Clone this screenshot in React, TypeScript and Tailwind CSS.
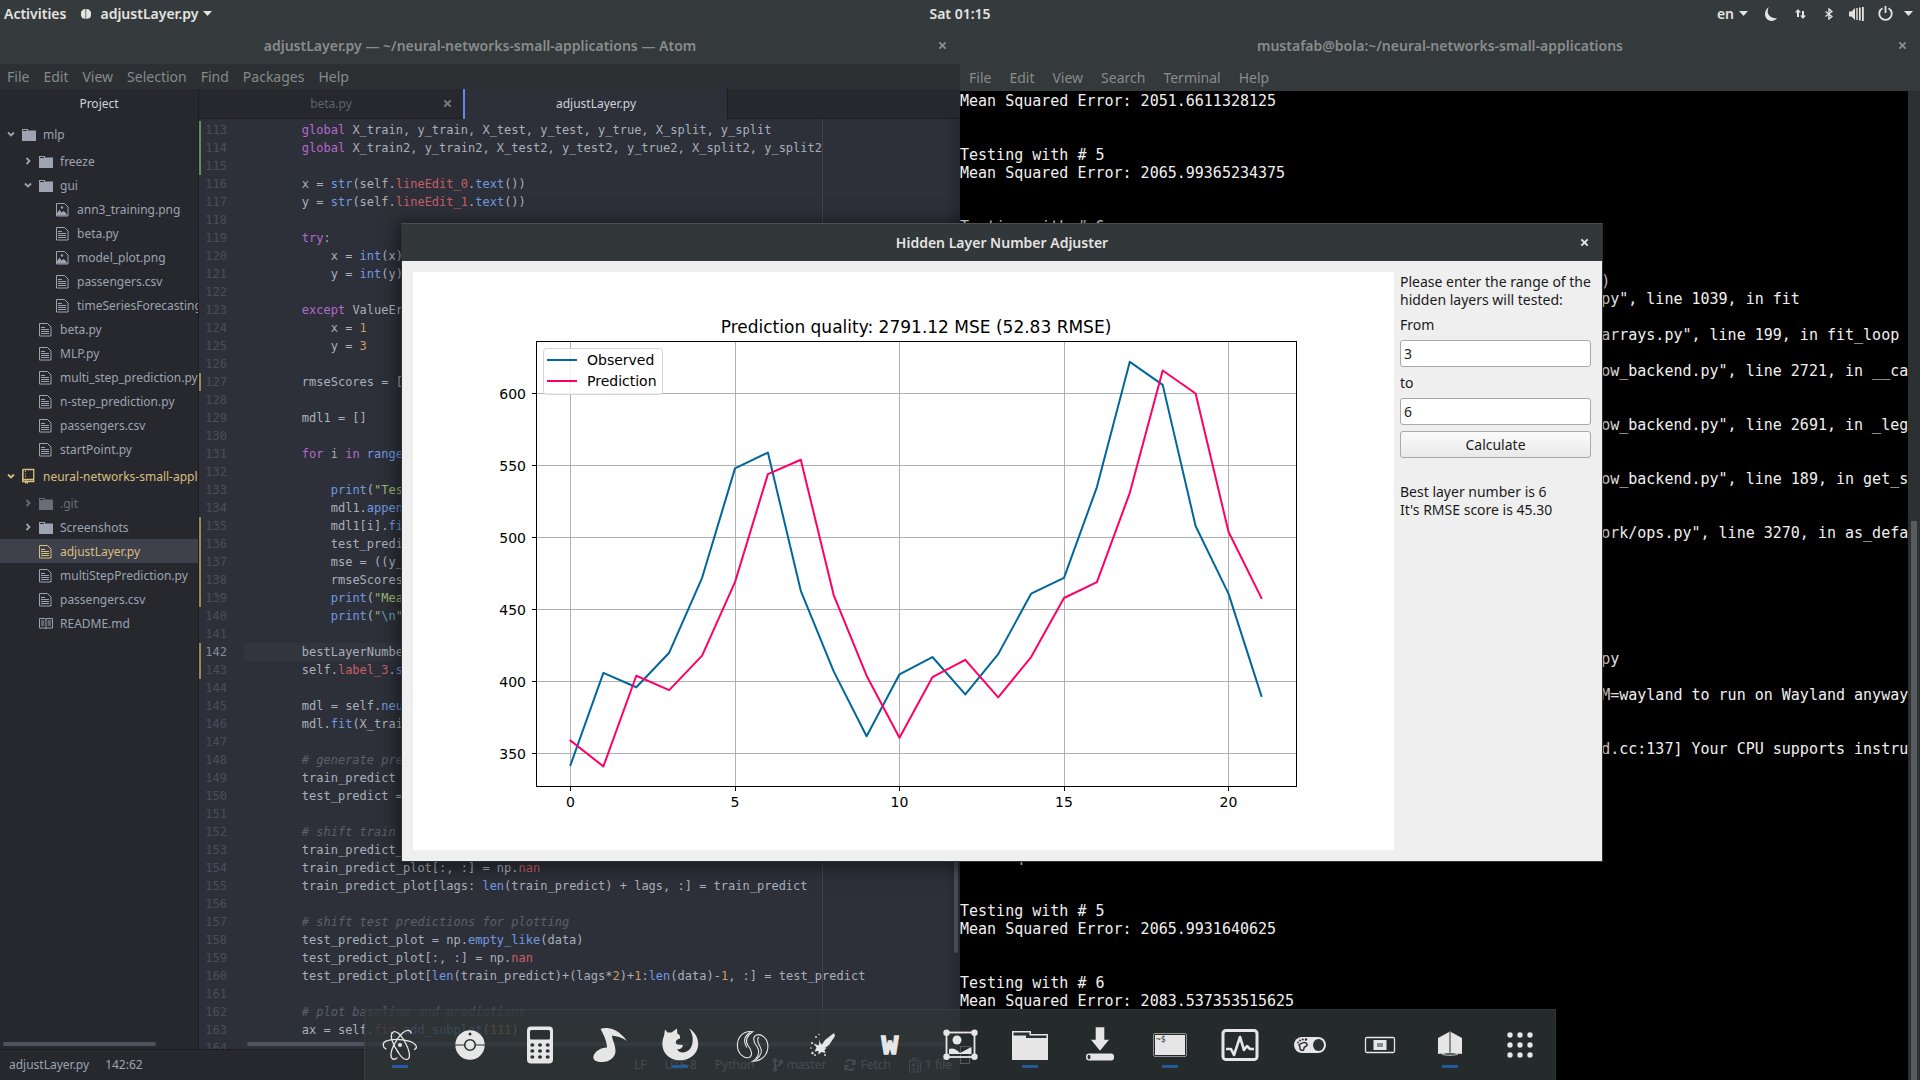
import React from "react";

type Tok = string | [keyof typeof TOKEN_COLORS, string];

const TOKEN_COLORS = {
  k: "text-[#b36bcb]",
  f: "text-[#7199e0]",
  r: "text-[#c65f68]",
  n: "text-[#cd9c62]",
  s: "text-[#98bb70]",
  e: "text-[#5ba5b0]",
  c: "italic text-[#5b606b]",
};

const I8 = "        ";
const I12 = "            ";

const CODE: Tok[][] = [
  [I8, ["k", "global"], " X_train, y_train, X_test, y_test, y_true, X_split, y_split"],
  [I8, ["k", "global"], " X_train2, y_train2, X_test2, y_test2, y_true2, X_split2, y_split2"],
  [],
  [I8, "x = ", ["f", "str"], "(self.", ["r", "lineEdit_0"], ".", ["f", "text"], "())"],
  [I8, "y = ", ["f", "str"], "(self.", ["r", "lineEdit_1"], ".", ["f", "text"], "())"],
  [],
  [I8, ["k", "try"], ":"],
  [I12, "x = ", ["f", "int"], "(x)"],
  [I12, "y = ", ["f", "int"], "(y)"],
  [],
  [I8, ["k", "except"], " ValueError:"],
  [I12, "x = ", ["n", "1"]],
  [I12, "y = ", ["n", "3"]],
  [],
  [I8, "rmseScores = []"],
  [],
  [I8, "mdl1 = []"],
  [],
  [I8, ["k", "for"], " i ", ["k", "in"], " ", ["f", "range"], "(x, y):"],
  [],
  [I12, ["f", "print"], "(", ["s", '"Testing"'], ")"],
  [I12, "mdl1.", ["f", "append"], "()"],
  [I12, "mdl1[i].", ["f", "fit"], "()"],
  [I12, "test_predict = []"],
  [I12, "mse = ((y_true))"],
  [I12, "rmseScores.", ["f", "append"], "()"],
  [I12, ["f", "print"], "(", ["s", '"Mean"'], ")"],
  [I12, ["f", "print"], "(", ["s", '"'], ["e", "\\n"], ["s", '"'], ")"],
  [],
  [I8, "bestLayerNumber = x"],
  [I8, "self.", ["r", "label_3"], ".", ["f", "setText"], "()"],
  [],
  [I8, "mdl = self.", ["f", "neuralNet"], "()"],
  [I8, "mdl.", ["f", "fit"], "(X_train)"],
  [],
  [I8, ["c", "# generate predictions"]],
  [I8, "train_predict = mdl"],
  [I8, "test_predict = mdl"],
  [],
  [I8, ["c", "# shift train"]],
  [I8, "train_predict_plot"],
  [I8, "train_predict_plot[:, :] = np.", ["r", "nan"]],
  [I8, "train_predict_plot[lags: ", ["f", "len"], "(train_predict) + lags, :] = train_predict"],
  [],
  [I8, ["c", "# shift test predictions for plotting"]],
  [I8, "test_predict_plot = np.", ["f", "empty_like"], "(data)"],
  [I8, "test_predict_plot[:, :] = np.", ["r", "nan"]],
  [I8, "test_predict_plot[", ["f", "len"], "(train_predict)+(lags*", ["n", "2"], ")+", ["n", "1"], ":", ["f", "len"], "(data)-", ["n", "1"], ", :] = test_predict"],
  [],
  [I8, ["c", "# plot baseline and predictions"]],
  [I8, "ax = self.", ["r", "fig"], ".", ["f", "add_subplot"], "(", ["n", "111"], ")"],
  [],
];

const FIRST_LINE = 113;
const ADDED = new Set([113, 114, 115]);
const MODIFIED = new Set([127, 135, 136, 137, 138, 139, 142, 143]);
const CURSOR_LINE = 142;

const TERMINAL_ROWS: Record<number, string> = {
  0: "Mean Squared Error: 2051.6611328125",
  3: "Testing with # 5",
  4: "Mean Squared Error: 2065.99365234375",
  7: "Testing with # 6",
  10: ")".padStart(72),
  11: 'training.py", line 1039, in fit'.padStart(93),
  13: 'training_arrays.py", line 199, in fit_loop'.padStart(104),
  15: 'tensorflow_backend.py", line 2721, in __ca'.padStart(105),
  18: 'tensorflow_backend.py", line 2691, in _leg'.padStart(105),
  21: 'tensorflow_backend.py", line 189, in get_s'.padStart(105),
  24: 'framework/ops.py", line 3270, in as_defa'.padStart(105),
  31: "adjustLayer.py".padStart(73),
  33: "QT_QPA_PLATFORM=wayland to run on Wayland anyway".padStart(105),
  36: "cpu_feature_guard.cc:137] Your CPU supports instru".padStart(105),
  42: "Mean Squared Error: 2051.6611328125",
  45: "Testing with # 5",
  46: "Mean Squared Error: 2065.9931640625",
  49: "Testing with # 6",
  50: "Mean Squared Error: 2083.537353515625",
};

type Node = {
  name: string;
  depth: 0 | 1 | 2;
  icon: "folder" | "repo" | "file" | "image" | "book";
  open?: boolean;
  tone?: "dim" | "gold";
  selected?: boolean;
};

const TREE: Node[] = [
  { name: "mlp", depth: 0, icon: "folder", open: true },
  { name: "freeze", depth: 1, icon: "folder", open: false },
  { name: "gui", depth: 1, icon: "folder", open: true },
  { name: "ann3_training.png", depth: 2, icon: "image" },
  { name: "beta.py", depth: 2, icon: "file" },
  { name: "model_plot.png", depth: 2, icon: "image" },
  { name: "passengers.csv", depth: 2, icon: "file" },
  { name: "timeSeriesForecastingTest.py", depth: 2, icon: "file" },
  { name: "beta.py", depth: 1, icon: "file" },
  { name: "MLP.py", depth: 1, icon: "file" },
  { name: "multi_step_prediction.py", depth: 1, icon: "file" },
  { name: "n-step_prediction.py", depth: 1, icon: "file" },
  { name: "passengers.csv", depth: 1, icon: "file" },
  { name: "startPoint.py", depth: 1, icon: "file" },
  { name: "neural-networks-small-applications", depth: 0, icon: "repo", open: true, tone: "gold" },
  { name: ".git", depth: 1, icon: "folder", open: false, tone: "dim" },
  { name: "Screenshots", depth: 1, icon: "folder", open: false },
  { name: "adjustLayer.py", depth: 1, icon: "file", tone: "gold", selected: true },
  { name: "multiStepPrediction.py", depth: 1, icon: "file" },
  { name: "passengers.csv", depth: 1, icon: "file" },
  { name: "README.md", depth: 1, icon: "book" },
];

const DEPTH_PAD = { 0: "pl-[7px]", 1: "pl-[24px]", 2: "pl-[41px]" };

function TreeIcon({ kind }: { kind: Node["icon"] }) {
  if (kind === "folder")
    return (
      <svg className="h-4 w-4 shrink-0" viewBox="0 0 16 16" fill="currentColor">
        <path d="M1 3h6v1.500h8V15H1z" />
        <path d="M2 4h4v1H2z" fill="#26282d" />
      </svg>
    );
  if (kind === "repo")
    return (
      <svg className="h-4 w-4 shrink-0" viewBox="0 0 16 16" fill="none" stroke="currentColor">
        <path d="M1.700 1.500h11v12H7M4 13.500H1.700V1.500M2 11.500h10.500M2 1.500V13" strokeWidth="1.300" />
        <path d="M4.500 3v6" strokeDasharray="1 1.400" />
        <path d="M4 12.500h3v3.500l-1.500-1.300L4 16z" fill="currentColor" stroke="none" />
      </svg>
    );
  if (kind === "book")
    return (
      <svg className="h-4 w-4 shrink-0" viewBox="0 0 16 16" fill="none" stroke="currentColor">
        <path d="M1.500 3.500h5.500l1 .7 1-.7h5.500v9.500H9.300l-1.300.9-1.300-.9H1.500zM8 4v9.500M3 6h3.300M3 8h3.300M3 10h3.300M9.700 6H13M9.700 8H13M9.700 10H13" />
      </svg>
    );
  if (kind === "image")
    return (
      <svg className="h-4 w-4 shrink-0" viewBox="0 0 16 16" fill="none" stroke="currentColor">
        <path d="M1.500 2.500h8l3.500 3.500v9h-11.500z" />
        <path d="M2 14.500v-2.500l2.500-3.500 2 3 1.500-1.500 2 1 2.500 3.500z" fill="currentColor" stroke="none" />
        <circle cx="7" cy="6.500" r="1.200" fill="currentColor" stroke="none" />
      </svg>
    );
  return (
    <svg className="h-4 w-4 shrink-0" viewBox="0 0 16 16" fill="none" stroke="currentColor">
      <path d="M1.500 2.500h8l3.500 3.500v9h-11.500z" />
      <path d="M3 6.500h4M3 8.500h8M3 10.500h8M3 12.500h8" />
    </svg>
  );
}

function Chevron({ open }: { open: boolean }) {
  return (
    <svg className="h-2 w-2 shrink-0" viewBox="0 0 8 8" fill="none" stroke="currentColor" strokeWidth="1.800">
      <path d={open ? "M1 2.500l3 3 3-3" : "M2.500 1l3 3-3 3"} />
    </svg>
  );
}

function Cross({ className }: { className: string }) {
  return (
    <svg className={className} viewBox="0 0 10 10" fill="none" stroke="currentColor" strokeWidth="2.200">
      <path d="M1.500 1.500l7 7M8.500 1.500l-7 7" />
    </svg>
  );
}

function Caret() {
  return (
    <svg className="h-[5px] w-[9px]" viewBox="0 0 9 5" fill="currentColor">
      <path d="M0 0h9L4.500 5z" />
    </svg>
  );
}

function TopBar() {
  return (
    <header className="grid h-[27px] shrink-0 grid-cols-3 items-center bg-[#353a3c] text-[14px] font-semibold text-[#e4e4e2]">
      <div className="flex items-center pl-1">
        <button>Activities</button>
        <button className="ml-[15px] flex items-center">
          <svg className="mr-[9px] h-[10px] w-[10px]" viewBox="0 0 10 10" fill="currentColor">
            <path d="M4.500 0v10L1 9 0 6.500V3L2 .5zM5.200 0L8 .5 10 3v3.500L9 9l-3.800 1z" />
          </svg>
          adjustLayer.py
          <span className="ml-[5px]"><Caret /></span>
        </button>
      </div>
      <button className="justify-self-center">Sat 01:15</button>
      <div className="flex items-center justify-end pr-[7px]">
        <button className="flex items-center gap-[5px]">en <Caret /></button>
        <svg className="ml-[17px] h-[14px] w-3" viewBox="0 0 12 14" fill="currentColor">
          <path d="M4 0C1.500 1.500 0 4 0 7c0 4 3 7 6.500 7 2.200 0 4.200-1.200 5.500-3C7 12 2.500 8 2.700 4.200 2.800 2.500 3.200 1 4 0z" />
        </svg>
        <svg className="ml-[18px] h-3 w-[11px]" viewBox="0 0 11 12" fill="currentColor">
          <path d="M3 1l3 3.500H4V9H2V4.500H0zM8 11L5 7.500h2V3h2v4.500h2z" />
        </svg>
        <svg className="ml-[19px] h-3 w-2" viewBox="0 0 8 12" fill="none" stroke="currentColor" strokeWidth="1.400">
          <path d="M.5 3.500l6.500 5L4 11V1l3 2.500-6.500 5" />
        </svg>
        <svg className="ml-4 h-4 w-[15px]" viewBox="0 0 15 16" fill="currentColor">
          <path d="M0 5.500h2.500L6 2v12l-3.500-3.500H0zM7.300 2h1.400v12H7.300zM10 1.500h1.700v13H10zM13 1h1.800v14H13z" />
        </svg>
        <svg className="ml-[14px] h-[15px] w-[15px]" viewBox="0 0 15 15" fill="none" stroke="currentColor" strokeWidth="1.800">
          <path d="M4.500 2.200a6.200 6.200 0 1 0 6 0M7.500 0v7" />
        </svg>
        <span className="ml-[11px]"><Caret /></span>
      </div>
    </header>
  );
}

function TreeRow({ node }: { node: Node }) {
  const tone = node.tone === "gold" ? "text-[#d8bf80]" : node.tone === "dim" ? "text-[#686d78]" : "text-[#9da3b0]";
  return (
    <li>
      <button
        className={`flex w-full items-center overflow-hidden whitespace-nowrap text-left ${DEPTH_PAD[node.depth]} ${
          node.depth === 0 ? "h-[30px]" : "h-6"
        } ${node.selected ? "bg-[#3e404b]" : ""} ${tone}`}
      >
        {node.open === undefined ? <span className="w-2 shrink-0" /> : <Chevron open={node.open} />}
        <span className="mx-[6px] flex"><TreeIcon kind={node.icon} /></span>
        <span className="pt-px">{node.name}</span>
      </button>
    </li>
  );
}

function Sidebar() {
  return (
    <aside className="flex w-[199px] shrink-0 flex-col overflow-hidden border-r border-[#1c1d21] bg-[#26282d] text-[12px]">
      <h2 className="flex h-[30px] shrink-0 items-center justify-center text-[#d0d3da]">Project</h2>
      <ul>
        {TREE.map((n, i) => (
          <TreeRow key={i} node={n} />
        ))}
      </ul>
      <div className="mb-[3px] ml-[3px] mt-auto h-1 w-[153px] rounded-full bg-[#50535f]" />
    </aside>
  );
}

function CodeLine({ tokens, number }: { tokens: Tok[]; number: number }) {
  const mark = ADDED.has(number) ? "bg-[#5a9168]" : MODIFIED.has(number) ? "bg-[#98895c]" : "";
  const active = number === CURSOR_LINE;
  return (
    <div className="flex h-[18px]">
      <span className={`w-[2px] shrink-0 ${mark}`} />
      <span className={`w-[26px] shrink-0 text-right ${active ? "text-[#868b98]" : "text-[#4a4e5a]"}`}>{number}</span>
      <span className="w-[17px] shrink-0" />
      <code className={`flex-1 whitespace-pre font-['DejaVu_Sans_Mono',monospace] text-[12px] ${active ? "bg-[#32353e]" : ""}`}>
        {tokens.map((t, i) =>
          typeof t === "string" ? t : <span key={i} className={TOKEN_COLORS[t[0]]}>{t[1]}</span>,
        )}
      </code>
    </div>
  );
}

function Editor() {
  return (
    <section className="flex min-w-0 flex-1 flex-col bg-[#2d3038]">
      <div className="flex h-[30px] shrink-0 bg-[#26282d] text-[12px]">
        <button className="relative flex w-[264px] items-center justify-center border-b border-[#1c1d21] text-[#5e626d]">
          beta.py
          <Cross className="absolute right-[11px] h-[9px] w-[9px] text-[#777b86]" />
        </button>
        <button className="flex w-[265px] items-center justify-center border-l-2 border-r border-l-[#6c82e8] border-r-[#1c1d21] bg-[#2d3038] text-[#cfd2d9]">
          adjustLayer.py
        </button>
        <div className="flex-1 border-b border-[#1c1d21]" />
      </div>
      <div className="relative min-h-0 flex-1 overflow-hidden pt-[2px] font-['DejaVu_Sans_Mono',monospace] text-[12px] leading-[18px] text-[#a9afbb]">
        <div className="absolute bottom-0 left-[623px] top-0 w-px bg-[#40434c]" />
        <div className="relative">
          {CODE.map((line, i) => (
            <CodeLine key={i} tokens={line} number={FIRST_LINE + i} />
          ))}
        </div>
        <div className="absolute bottom-24 right-[2px] top-96 w-1 rounded-full bg-[#50535f]" />
        <div className="absolute bottom-[3px] left-12 right-4 h-1 rounded-full bg-[#50535f]" />
        <div className="absolute bottom-0 right-0 top-0 w-4 bg-linear-to-r from-transparent to-black/15" />
      </div>
    </section>
  );
}

function AtomWindow() {
  return (
    <section className="flex min-h-0 min-w-0 flex-col">
      <div className="relative flex h-[37px] shrink-0 items-center justify-center bg-[#34393b] text-[14px] font-semibold text-[#888c8c]">
        adjustLayer.py — ~/neural-networks-small-applications — Atom
        <button aria-label="Close Atom" className="absolute right-[13px]"><Cross className="h-[9px] w-[9px]" /></button>
      </div>
      <nav className="flex h-[25px] shrink-0 items-center gap-[14px] bg-[#2c3032] pl-[7px] text-[14px] text-[#868a8a]">
        {["File", "Edit", "View", "Selection", "Find", "Packages", "Help"].map((m) => (
          <button key={m}>{m}</button>
        ))}
      </nav>
      <div className="flex min-h-0 flex-1">
        <Sidebar />
        <Editor />
      </div>
      <footer className="flex h-[31px] shrink-0 items-center border-t border-[#1c1d21] bg-[#26282d] pl-[9px] text-[12px] text-[#9da3b0]">
        <span>adjustLayer.py</span>
        <span className="ml-4">142:62</span>
        <div className="ml-auto flex items-center pr-2">
          <span>LF</span>
          <span className="ml-[18px]">UTF-8</span>
          <span className="ml-[18px]">Python</span>
          <svg className="ml-[18px] mr-1 h-[14px] w-[10px]" viewBox="0 0 10 14" fill="none" stroke="currentColor" strokeWidth="1.800">
            <circle cx="2" cy="2.300" r="1.200" /><circle cx="2" cy="11.700" r="1.200" /><circle cx="8" cy="3.800" r="1.200" />
            <path d="M2 3.500v7M8 5c0 3-6 2-6 4.500" />
          </svg>
          <span>master</span>
          <svg className="ml-[18px] mr-1 h-3 w-3" viewBox="0 0 12 12" fill="none" stroke="currentColor" strokeWidth="1.800">
            <path d="M1 7a5 5 0 0 0 9 2M11 5a5 5 0 0 0-9-2M10.800 1v4H7.500M1.200 11V7h3.300" />
          </svg>
          <span>Fetch</span>
          <svg className="ml-[18px] mr-1 h-[15px] w-3" viewBox="0 0 12 15" fill="none" stroke="currentColor">
            <path d="M.5 2.500h6l2.500 2.500v9H.5zM3 .5h5l3.500 3.500v9M2.500 7h4M4.500 5v4M2.500 11h4" />
          </svg>
          <span>1 file</span>
        </div>
      </footer>
    </section>
  );
}

function TerminalWindow() {
  return (
    <section className="flex min-h-0 min-w-0 flex-col bg-[#34393b]">
      <div className="relative flex h-9 shrink-0 items-center justify-center text-[14px] font-semibold text-[#888c8c]">
        mustafab@bola:~/neural-networks-small-applications
        <button aria-label="Close terminal" className="absolute right-[13px]"><Cross className="h-[9px] w-[9px]" /></button>
      </div>
      <nav className="flex h-7 shrink-0 items-center gap-[18px] pl-[9px] text-[14px] text-[#888c8c]">
        {["File", "Edit", "View", "Search", "Terminal", "Help"].map((m) => (
          <button key={m}>{m}</button>
        ))}
      </nav>
      <div className="flex min-h-0 flex-1 bg-black">
        <pre className="min-w-0 flex-1 overflow-hidden pt-px font-['DejaVu_Sans_Mono',monospace] text-[15px] leading-[18px] text-[#f0f0f0]">
          {Array.from({ length: 53 }, (_, i) => (
            <div key={i} className="h-[18px]">{TERMINAL_ROWS[i] ?? ""}</div>
          ))}
          <div className="h-[18px] w-[10px] border border-[#f0f0f0]" />
        </pre>
        <div className="flex w-3 shrink-0 flex-col items-center bg-[#2c3032]">
          <div className="mt-[430px] w-[6px] flex-1 bg-[#565b5d]" />
        </div>
      </div>
    </section>
  );
}

const OBSERVED = [342, 406, 396, 420, 472, 548, 559, 463, 407, 362, 405, 417, 391, 419, 461, 472, 535, 622, 606, 508, 461, 390];
const PREDICTED = [359, 341, 404, 394, 418, 469, 544, 554, 460, 404, 361, 403, 415, 389, 417, 458, 469, 531, 616, 600, 504, 458];

const px = (v: number) => 157.5 + v * 32.9;
const py = (v: number) => 121.5 + (600 - v) * 1.44;
const toPoints = (d: number[]) => d.map((v, i) => `${px(i)},${py(v)}`).join(" ");

function Chart() {
  const xs = [0, 5, 10, 15, 20];
  const ys = [350, 400, 450, 500, 550, 600];
  return (
    <svg
      className="min-w-0 flex-1 bg-white font-['DejaVu_Sans',sans-serif]"
      viewBox="0 0 981 578"
      role="img"
      aria-label="Observed and predicted values"
    >
      {xs.map((x) => (
        <g key={x}>
          <line x1={Math.floor(px(x)) + 0.5} x2={Math.floor(px(x)) + 0.5} y1="70" y2="514" stroke="#b0b0b0" />
          <line x1={Math.floor(px(x)) + 0.5} x2={Math.floor(px(x)) + 0.5} y1="514" y2="519" stroke="#000" />
          <text x={px(x)} y="535" textAnchor="middle" fontSize="14">{x}</text>
        </g>
      ))}
      {ys.map((y) => (
        <g key={y}>
          <line x1="124" x2="883" y1={py(y)} y2={py(y)} stroke="#b0b0b0" />
          <line x1="119" x2="124" y1={py(y)} y2={py(y)} stroke="#000" />
          <text x="113" y={py(y) + 5} textAnchor="end" fontSize="14">{y}</text>
        </g>
      ))}
      <g fill="none" strokeWidth="2" strokeLinejoin="round" strokeLinecap="square">
        <polyline points={toPoints(OBSERVED)} stroke="#00679a" />
        <polyline points={toPoints(PREDICTED)} stroke="#ff0066" />
      </g>
      <rect x="123.500" y="69.500" width="760" height="445" fill="none" stroke="#000" />
      <text x="503" y="61" textAnchor="middle" fontSize="17">Prediction quality: 2791.12 MSE (52.83 RMSE)</text>
      <rect x="130.500" y="76.500" width="119" height="46" rx="3" fill="#fff" fillOpacity="0.800" stroke="#ccc" strokeOpacity="0.800" />
      <line x1="134" x2="164" y1="88" y2="88" stroke="#00679a" strokeWidth="2" />
      <line x1="134" x2="164" y1="109" y2="109" stroke="#ff0066" strokeWidth="2" />
      <text x="174" y="93" fontSize="14">Observed</text>
      <text x="174" y="114" fontSize="14">Prediction</text>
    </svg>
  );
}

function AdjusterDialog() {
  const field =
    "h-[27px] w-full rounded-[3px] border border-[#a9a9a9] bg-white px-[3px] text-[14px] leading-[18px] text-[#1a1a1a] outline-none";
  return (
    <section
      role="dialog"
      aria-label="Hidden Layer Number Adjuster"
      className="absolute left-[401px] top-[223px] flex w-[1202px] flex-col border border-[#2c3133] border-t-[#4a4f51] bg-[#efefef] shadow-[0_2px_16px_3px_rgba(0,0,0,0.5)]"
    >
      <div className="relative flex h-[37px] items-center justify-center bg-[#323739] text-[14px] font-semibold text-[#e4e4e2]">
        Hidden Layer Number Adjuster
        <button aria-label="Close dialog" className="absolute right-[13px]"><Cross className="h-[9px] w-[9px]" /></button>
      </div>
      <div className="flex gap-[6px] p-[11px]">
        <Chart />
        <form className="flex w-[191px] shrink-0 flex-col pt-px text-[14px] leading-[18px] text-[#1a1a1a]" onSubmit={(e) => e.preventDefault()}>
          <p className="whitespace-nowrap">
            Please enter the range of the
            <br />
            hidden layers will tested:
          </p>
          <label htmlFor="from" className="pb-[6px] pt-[7px]">From</label>
          <input id="from" className={field} defaultValue="3" />
          <label htmlFor="to" className="pb-[6px] pt-[7px]">to</label>
          <input id="to" className={field} defaultValue="6" />
          <button className="mt-[6px] h-[27px] rounded-[3px] border border-[#a9a9a9] bg-linear-to-b from-[#fbfbfb] to-[#e9e9e9]">
            Calculate
          </button>
          <output className="mt-[25px]">
            Best layer number is 6
            <br />
            It's RMSE score is 45.30
          </output>
        </form>
      </div>
    </section>
  );
}

const DARK = "#2b3031";

const DOCK: { label: string; running?: boolean; art: React.ReactNode }[] = [
  {
    label: "Atom",
    running: true,
    art: (
      <g fill="none" stroke="currentColor" strokeWidth="1.300" strokeLinecap="round">
        <path d="M6 24C2.500 22 2 18 6 16.200 12 13.500 26 14 32.500 17.500 37 20 37.500 23 34.500 24.500" />
        <path d="M12 8C15 4 20.500 9 25 17c4 7 6 15 3 17-3 1.500-7-2-10-7" />
        <path d="M17 33c-3 2.500-6.500 1-6-4 .5-6 6-16 11.500-21 4-3.500 8-3.500 8.500 0" />
        <path d="M12 8c-2 4 1 12 6 19" />
        <circle cx="20" cy="20" r="2" fill="currentColor" stroke="none" />
      </g>
    ),
  },
  {
    label: "Disc",
    art: (
      <g>
        <circle cx="20" cy="20" r="14.700" fill="currentColor" />
        <path d="M5 20h30" stroke={DARK} />
        <circle cx="20" cy="20" r="5.300" fill="currentColor" stroke={DARK} strokeWidth="1.600" />
        <circle cx="20" cy="9" r="1.500" fill={DARK} />
      </g>
    ),
  },
  {
    label: "Calculator",
    art: (
      <g>
        <rect x="7" y="1.500" width="26" height="37" rx="4" fill="currentColor" />
        <rect x="10" y="5" width="20" height="9.500" rx="1.500" fill={DARK} />
        {[20, 26, 32].map((y) => [12.3, 20, 27.7].map((x) => <ellipse key={`${x}-${y}`} cx={x} cy={y} rx="2" ry="1.700" fill={DARK} />))}
      </g>
    ),
  },
  {
    label: "Music",
    art: (
      <path
        fill="currentColor"
        d="M10.500 4C16 1.500 25 4 30 8.500c3 2.500 5.500 5 7 7.500-5-3.500-9-4.500-15-5.500 0 4 3.500 9 3.500 15.500C25.500 32 20 37 12 37 6.500 37 3 35 3.300 32c.7-5 6.700-9.500 13.700-9.500C17 17 14 10 10.500 4z"
      />
    ),
  },
  {
    label: "Firefox",
    running: true,
    art: (
      <g fill="currentColor">
        <path d="M4 11L5 4.500l2.500 3h4L17 3.500l.3 5c2.700 1 3.200 3 2.700 5-3 .5-4.700 2.500-4 5 1.500 2 4.500.5 7 2-1 3-3.500 4.500-6 3.500 2 4.500 8 4.500 12 1C34 20 34 10 29 3.500 36 7.500 38.500 14 38.200 20 37.500 29 30 35.300 20 35.300S3 29 2.400 20C2.200 16.500 3 13 4 11z" />
        <path d="M30 12c2 5 1 9-2 13 1-4 2-8 2-13z" fill={DARK} />
      </g>
    ),
  },
  {
    label: "Swirl",
    art: (
      <g fill="none" stroke="currentColor" strokeWidth="1.100">
        <path d="M22.700 6.700C12 5.500 6.700 13.500 7.500 22c.7 7 7 12 11.500 10.500 4-1.500 3-7-1-12-3-4.500-1.500-10 4.700-13.800z" />
        <path d="M20 7.500C13 12 13.500 17 17 22.500" />
        <path d="M22.700 36.300C33.500 36 38.500 28 37.800 19.500 37 12.500 31 8.500 26.500 10c-4 1.500-3.500 6.500.5 11.500 3 4.500 2 11-4.300 14.800z" />
        <path d="M29 12c-3 2-1 6 1 9.500 2.500 4 1.500 9-4 13" />
      </g>
    ),
  },
  {
    label: "Paint brush",
    art: (
      <g fill="currentColor">
        <path d="M34 8l1 3-6 9-4 3-4-2 4-6z" />
        <path d="M19 14l1.500 4 3 4 3 1-2 2 1 3-4-1-3 2.500 0-3.500-4 .5 2-4-3-4 5 2 1-3z" />
        <circle cx="12" cy="18" r="1" /><circle cx="11" cy="23" r=".8" /><circle cx="12.500" cy="28" r="1.200" /><circle cx="16" cy="12" r=".9" />
        <circle cx="15" cy="30" r=".9" /><circle cx="25" cy="30" r=".9" /><circle cx="19" cy="9.500" r=".7" />
      </g>
    ),
  },
  {
    label: "Writer",
    art: (
      <text x="20" y="29" textAnchor="middle" fill="currentColor" stroke="currentColor" strokeWidth="1.500" fontSize="28" fontWeight="700" fontFamily="Liberation Mono, monospace">W</text>
    ),
  },
  {
    label: "Screenshot",
    art: (
      <g fill="currentColor">
        <rect x="6.500" y="7.500" width="28" height="24.500" fill="none" stroke="currentColor" strokeWidth="1.800" />
        <circle cx="6.500" cy="7.700" r="3.200" /><circle cx="34.500" cy="7.700" r="3.200" /><circle cx="6.500" cy="31.700" r="3.200" /><circle cx="34.500" cy="31.700" r="3.200" />
        <circle cx="17" cy="15" r="4.500" />
        <path d="M9 24c4-1.500 7 0 11 4l11.500-6v7H9z" />
      </g>
    ),
  },
  {
    label: "Files",
    running: true,
    art: (
      <g fill="currentColor">
        <path d="M2 6h19v3h17v26H2z" />
        <path d="M3.500 7.500h16v3h17V13H16v-2.500H3.500z" fill={DARK} />
      </g>
    ),
  },
  {
    label: "Downloads",
    art: (
      <g fill="currentColor">
        <path d="M15.700 2.300h8.600v12.500H29l-9 11-9-11h4.700z" />
        <rect x="6" y="28.500" width="28" height="7" rx="3" />
        <ellipse cx="9" cy="32" rx="1.500" ry="2.200" fill={DARK} />
      </g>
    ),
  },
  {
    label: "Terminal",
    running: true,
    art: (
      <g>
        <rect x="3.500" y="8.500" width="33" height="23" rx="1.500" fill="none" stroke="#8d9091" />
        <rect x="5" y="10" width="30" height="20" fill="currentColor" />
        <text x="6" y="17" fontSize="8" fontFamily="DejaVu Sans Mono, monospace" fill={DARK}>~$</text>
      </g>
    ),
  },
  {
    label: "System monitor",
    art: (
      <g fill="none" stroke="currentColor" strokeWidth="3">
        <rect x="3" y="5.500" width="34" height="29" rx="3" />
        <path d="M6 24h5l3 6 6-18 4 13 3-4 3 3h4" strokeLinejoin="round" strokeWidth="2.600" />
      </g>
    ),
  },
  {
    label: "Tweaks",
    art: (
      <g>
        <rect x="4" y="12" width="32" height="16" rx="8" fill="currentColor" />
        <ellipse cx="28.500" cy="20" rx="5.500" ry="6" fill={DARK} />
        <path d="M9 20c3-3 7-3 8-1 1 3-3 2-3 4s-1 3-3 2 0-3-2-5z" fill="none" stroke={DARK} strokeWidth="1.500" />
        <g fill={DARK}><circle cx="8" cy="17.500" r=".9" /><circle cx="10" cy="15.500" r="1" /><circle cx="12.800" cy="14.500" r="1.100" /><circle cx="16" cy="14.500" r="1.300" /></g>
      </g>
    ),
  },
  {
    label: "Card",
    art: (
      <g>
        <rect x="5.500" y="12.500" width="29" height="15" rx="1.500" fill="none" stroke="currentColor" strokeWidth="1.300" />
        <rect x="13.500" y="15" width="13" height="10" fill="currentColor" />
        <path d="M18 18v4M20 18v4M22 18v4" stroke={DARK} />
      </g>
    ),
  },
  {
    label: "Box",
    running: true,
    art: (
      <g>
        <path d="M8 13L20 6.500 32 13v16c-3-.5-8 0-12 1.500-4-1.500-9-2-12-1.500z" fill="currentColor" />
        <path d="M20 7v22" stroke={DARK} />
        <ellipse cx="20" cy="29" rx="8" ry="1.200" fill={DARK} stroke="currentColor" strokeWidth=".8" />
      </g>
    ),
  },
  {
    label: "Show applications",
    art: (
      <g fill="currentColor">
        {[10, 20, 30].map((y) => [10, 20, 30].map((x) => <circle key={`${x}-${y}`} cx={x} cy={y} r="2.700" />))}
      </g>
    ),
  },
];

function Dock() {
  return (
    <nav className="absolute bottom-0 left-1/2 flex h-[71px] -translate-x-1/2 border border-b-0 border-white/5 bg-[#2e3436]/80 text-[#e6e6e6]">
      {DOCK.map((d) => (
        <button key={d.label} aria-label={d.label} className="flex w-[70px] flex-col items-center pt-[15px]">
          <svg className="h-10 w-10 overflow-visible" viewBox="0 0 40 40">{d.art}</svg>
          {d.running && <span className="h-[3px] w-4 bg-[#215d9c]" />}
        </button>
      ))}
    </nav>
  );
}

export default function App() {
  return (
    <div className="relative flex h-screen w-full flex-col overflow-hidden bg-[#34393b] font-['Noto_Sans',sans-serif]">
      <TopBar />
      <main className="grid min-h-0 flex-1 grid-cols-2">
        <AtomWindow />
        <TerminalWindow />
      </main>
      <AdjusterDialog />
      <Dock />
    </div>
  );
}
